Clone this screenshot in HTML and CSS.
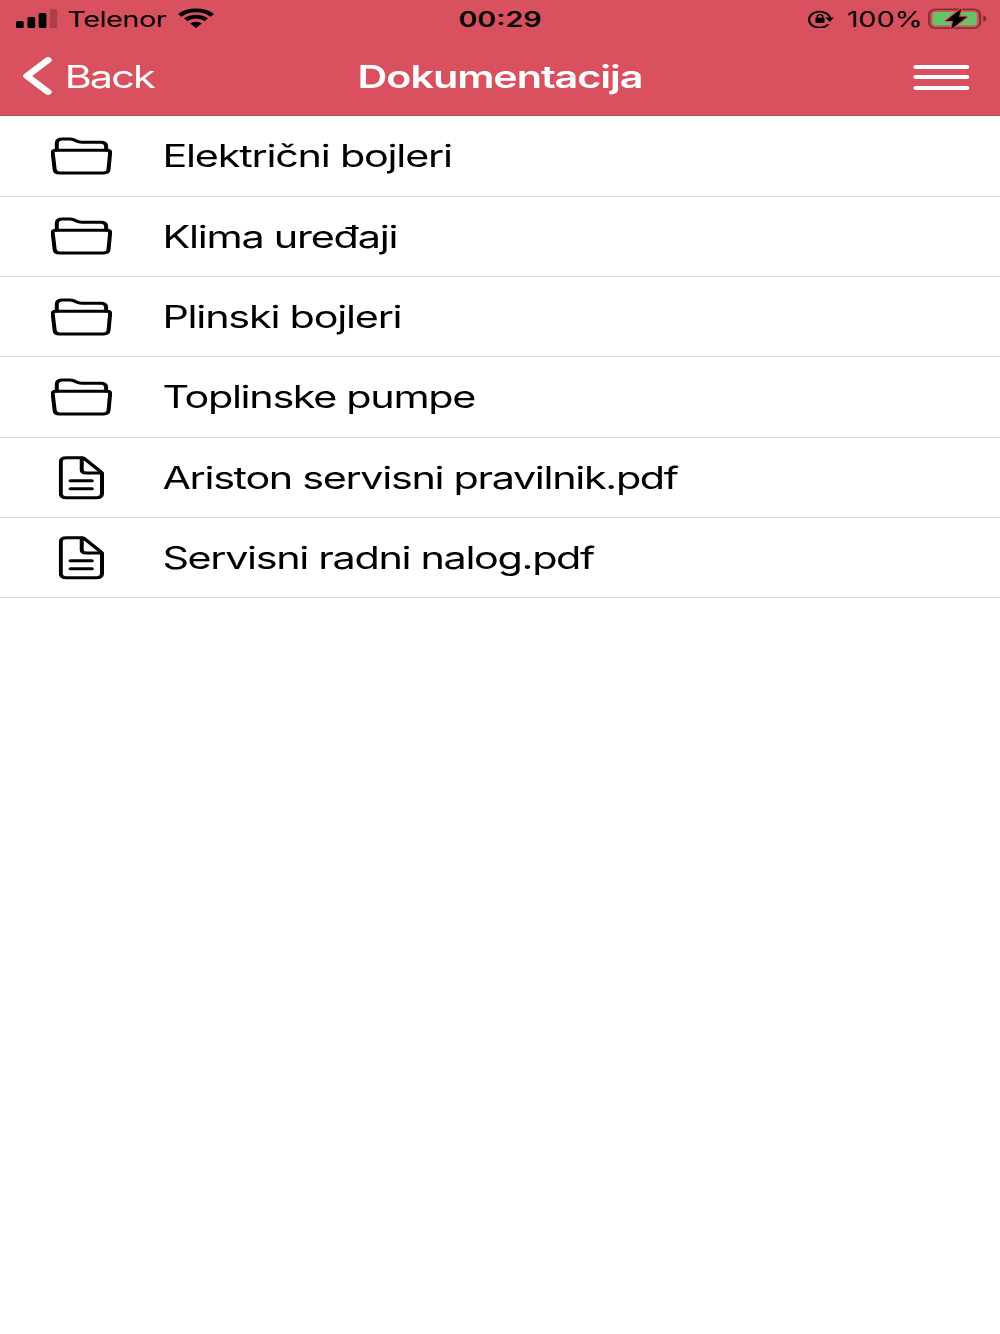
FILE: index.html
```html
<!DOCTYPE html>
<html lang="hr">
<head>
    <meta charset="UTF-8">
    <meta name="viewport" content="width=device-width, initial-scale=1.0">
    <title>Dokumentacija</title>
    <link rel="stylesheet" href="styles.css">
</head>
<body>
    <!-- shared icons -->
    <svg class="sprite">
        <symbol id="folder" viewBox="0 0 46 38">
            <path d="M4.6 13V6.2q0-4.2 4.2-4.2H14q2.2 0 3.7 1l1.6 1.1q1.8 1.2 4 1.2h14.2q4.1 0 4.1 4V13"/>
            <path d="M3.7 13.3h38.6q2.5 0 2.3 2.4l-1.2 16.8q-.3 3.5-3.6 3.5H6.6q-3.3 0-3.6-3.5L1.5 15.7q-.2-2.4 2.2-2.4z"/>
        </symbol>
        <symbol id="file" viewBox="0 0 34 44">
            <path d="M17.4 1.7H6Q1.6 1.7 1.6 6v31.4q0 4.3 4.4 4.3h22.2q4.3 0 4.3-4.3V18q0-1.3-.9-2.2L18.9 2.3q-.6-.6-1.5-.6z"/>
            <path d="M17.3 2v11.8q0 3.2 3.2 3.2h11.8M8.9 24.7h16M8.9 32.7h16"/>
        </symbol>
    </svg>

    <div class="screen">
        <header class="header">
            <div class="status">
                <div class="status-left">
                    <svg class="signal" viewBox="0 0 31 20">
                        <rect x="0" y="13" width="5.8" height="7" rx="1.5"/>
                        <rect x="8.6" y="9" width="5.8" height="11" rx="1.5"/>
                        <rect x="17" y="5" width="5.8" height="15" rx="1.5"/>
                        <rect x="25.4" y="1" width="5.6" height="19" rx="1.5" opacity=".22"/>
                    </svg>
                    <span class="carrier">Telenor</span>
                    <svg class="wifi" viewBox="0 0 28 20">
                        <path d="M1.8 7.3a17.5 17.5 0 0 1 24.4 0M6.3 11.7a11 11 0 0 1 15.4 0" fill="none" stroke="#000" stroke-width="3.7"/>
                        <path d="M14 20l-4.4-4.4a6.4 6.4 0 0 1 8.8 0z"/>
                    </svg>
                </div>
                <span class="time">00:29</span>
                <div class="status-right">
                    <svg class="lock" viewBox="0 0 20 18">
                        <path d="M15.3 14.3A8 8 0 1 1 16.6 8" fill="none" stroke="#000" stroke-width="1.7"/>
                        <path d="M13 7.6h6.4l-3 4.4z"/>
                        <rect x="5.6" y="7.7" width="6.8" height="5.3" rx=".8"/>
                        <path d="M7 8V6.6a2 2 0 0 1 4 0V8" fill="none" stroke="#000" stroke-width="1.2"/>
                    </svg>
                    <span class="percent">100%</span>
                    <svg class="battery" viewBox="0 0 46 22">
                        <rect x=".9" y="1.4" width="38.2" height="18.7" rx="5" fill="none" stroke="#000" stroke-opacity=".4" stroke-width="1.7"/>
                        <path d="M41.5 7.5v6.6q2.3-1 2.3-3.3t-2.3-3.3z" opacity=".45"/>
                        <rect x="3.4" y="4.1" width="33.2" height="13.3" rx="2.6" fill="#65c466"/>
                        <path class="bolt" d="M25 .4L13.2 12.9h5.6L17.4 21.2 29.2 8.7h-6z"/>
                    </svg>
                </div>
            </div>
            <nav class="nav">
                <a class="back">
                    <svg class="chevron" viewBox="0 0 22 38"><path d="M19 3L3.2 19 19 35"/></svg>
                    <span>Back</span>
                </a>
                <h1 class="title">Dokumentacija</h1>
                <div class="menu">
                    <span></span>
                    <span></span>
                    <span></span>
                </div>
            </nav>
        </header>

        <ul class="list">
            <li class="item">
                <div class="icon"><svg class="folder"><use href="#folder"/></svg></div>
                <span>Električni bojleri</span>
            </li>
            <li class="item">
                <div class="icon"><svg class="folder"><use href="#folder"/></svg></div>
                <span>Klima uređaji</span>
            </li>
            <li class="item">
                <div class="icon"><svg class="folder"><use href="#folder"/></svg></div>
                <span>Plinski bojleri</span>
            </li>
            <li class="item">
                <div class="icon"><svg class="folder"><use href="#folder"/></svg></div>
                <span class="tight">Toplinske pumpe</span>
            </li>
            <li class="item">
                <div class="icon"><svg class="file"><use href="#file"/></svg></div>
                <span class="tight">Ariston servisni pravilnik.pdf</span>
            </li>
            <li class="item">
                <div class="icon"><svg class="file"><use href="#file"/></svg></div>
                <span class="tight">Servisni radni nalog.pdf</span>
            </li>
        </ul>
    </div>
</body>
</html>
```
FILE: styles.css
```css
* {
    box-sizing: border-box;
}
body {
    margin: 0;
    background: #fff;
    color: #000;
    font-family: Inter, "Liberation Sans", sans-serif;
    overflow: hidden;
}
svg {
    display: block;
    flex: none;
}
.sprite {
    display: none;
}
.screen {
    width: 750px;
    height: 1334px;
    transform: scaleX(1.33333);
    transform-origin: 0 0;
}
.header {
    height: 116.2px;
    background: #d9515e;
    border-bottom: 1px solid #c24854;
}
.status {
    display: grid;
    grid-template-columns: 1fr auto 1fr;
    height: 38px;
    padding: 0 10px 0 12px;
    font-size: 21.5px;
    line-height: 38px;
}
.status-left, .status-right {
    display: flex;
    align-items: center;
}
.status-left svg {
    margin-top: -2px;
}
.status-right {
    justify-content: flex-end;
}
.signal {
    width: 31px;
    height: 20px;
    margin-right: 7.5px;
}
.carrier {
    width: 74.5px;
    letter-spacing: -0.3px;
    white-space: nowrap;
}
.wifi {
    width: 28px;
    height: 20px;
    margin-left: 8px;
}
.time {
    margin-left: -2px;
    font-weight: 600;
}
.lock {
    width: 20px;
    height: 18px;
    margin-right: 9px;
}
.percent {
    margin-right: 4px;
}
.battery {
    width: 46px;
    height: 22px;
    margin-top: -1px;
    margin-right: -2px;
    overflow: visible;
}
.bolt {
    stroke: #d9515e;
    stroke-width: 2;
    paint-order: stroke;
    stroke-linejoin: round;
}
.nav {
    display: grid;
    grid-template-columns: 1fr auto 1fr;
    align-items: center;
    height: 77px;
    padding: 0 23px 0 17px;
    color: #fff;
    font-size: 31px;
}
.back {
    display: flex;
    align-items: center;
    gap: 9.5px;
    margin-top: -1px;
    letter-spacing: -1.4px;
}
.chevron {
    width: 22px;
    height: 38px;
    fill: none;
    stroke: #fff;
    stroke-width: 5.6;
    stroke-linecap: round;
    stroke-linejoin: round;
}
.title {
    margin: 0 -3px 0 3px;
    font-size: 31px;
    font-weight: 600;
    letter-spacing: -0.8px;
}
.menu {
    display: flex;
    flex-direction: column;
    gap: 6.5px;
    width: 42.5px;
    margin-top: 1px;
    justify-self: end;
}
.menu span {
    height: 4px;
    border-radius: 2px;
    background: #fff;
}
.list {
    margin: 0;
    padding: 0;
    list-style: none;
}
.item {
    display: flex;
    align-items: center;
    gap: 37.8px;
    height: 80.33px;
    padding-left: 38px;
    border-bottom: 1px solid #dcdcdc;
    font-size: 31px;
    letter-spacing: -0.92px;
    white-space: nowrap;
}
.tight {
    letter-spacing: -1px;
}
.icon {
    display: flex;
    justify-content: center;
    width: 46px;
    fill: none;
    stroke: #000;
    stroke-width: 3;
    stroke-linecap: round;
    stroke-linejoin: round;
}
.folder {
    width: 46px;
    height: 38px;
}
.file {
    width: 34px;
    height: 44px;
    margin-top: 1px;
}
```
